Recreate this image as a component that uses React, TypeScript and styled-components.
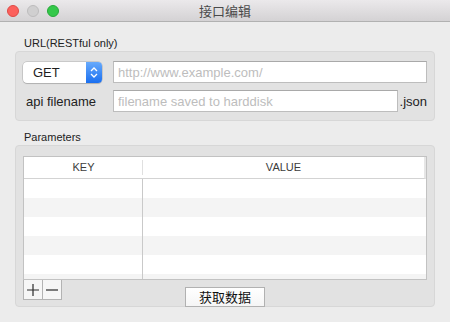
import styled, { createGlobalStyle } from "styled-components";

const GlobalStyle = createGlobalStyle`
  body {
    margin: 0;
    font-family: "Liberation Sans", "Noto Sans CJK SC", sans-serif;
    color: #262626;
  }
  * {
    box-sizing: border-box;
  }
`;

const LIGHTS = [
  { fill: "#fc605c", edge: "#de4a46" },
  { fill: "#d0cfd0", edge: "#bdbcbd" },
  { fill: "#34c84a", edge: "#27a93a" },
];

const ROW_COUNT = 6;

function App() {
  return (
    <>
      <GlobalStyle />
      <Window>
        <TitleBar>
          <Lights>
            {LIGHTS.map((l) => (
              <Light key={l.fill} $fill={l.fill} $edge={l.edge} />
            ))}
          </Lights>
          <Title>接口编辑</Title>
          <span />
        </TitleBar>

        <Content>
          <SectionLabel $top={15}>URL(RESTful only)</SectionLabel>
          <UrlBox>
            <Popup>
              <PopupText>GET</PopupText>
              <Stepper>
                <svg width="8" height="13" viewBox="0 0 8 13">
                  <path
                    d="M1 5 L4 2 L7 5 M1 8 L4 11 L7 8"
                    fill="none"
                    stroke="#fff"
                    strokeWidth="1.3"
                  />
                </svg>
              </Stepper>
            </Popup>
            <TextField placeholder="http://www.example.com/" />
            <FieldLabel>api filename</FieldLabel>
            <FileRow>
              <TextField placeholder="filename saved to harddisk" />
              <Suffix>.json</Suffix>
            </FileRow>
          </UrlBox>

          <SectionLabel $top={10}>Parameters</SectionLabel>
          <ParamBox>
            <Table>
              <HeaderRow>
                <HeaderCell $divider>KEY</HeaderCell>
                <HeaderCell>VALUE</HeaderCell>
              </HeaderRow>
              <Body>
                {Array.from({ length: ROW_COUNT }).map((_, i) => (
                  <Row key={i} $striped={i % 2 === 1}>
                    <KeyCell />
                    <div />
                  </Row>
                ))}
              </Body>
            </Table>
            <BottomRow>
              <SmallButtons>
                <SmallButton>
                  <svg width="14" height="14" viewBox="0 0 14 14">
                    <path d="M7 1 V13 M1 7 H13" stroke="#2b2b2b" strokeWidth="1.2" />
                  </svg>
                </SmallButton>
                <SmallButton>
                  <svg width="14" height="14" viewBox="0 0 14 14">
                    <path d="M1 7 H13" stroke="#2b2b2b" strokeWidth="1.2" />
                  </svg>
                </SmallButton>
              </SmallButtons>
              <FetchButton>获取数据</FetchButton>
              <span />
            </BottomRow>
          </ParamBox>
        </Content>
      </Window>
    </>
  );
}

const Window = styled.div`
  width: 450px;
  height: 322px;
  background: #ececec;
  display: flex;
  flex-direction: column;
  overflow: hidden;
`;

const TitleBar = styled.div`
  height: 22px;
  flex-shrink: 0;
  display: grid;
  grid-template-columns: 1fr auto 1fr;
  align-items: center;
  background: linear-gradient(#ebe9eb, #d4d2d4);
  border-bottom: 1px solid #b1b1b1;
`;

const Lights = styled.div`
  display: flex;
  gap: 8px;
  padding-left: 7px;
`;

const Light = styled.span<{ $fill: string; $edge: string }>`
  width: 12px;
  height: 12px;
  border-radius: 50%;
  background: ${(p) => p.$fill};
  border: 0.5px solid ${(p) => p.$edge};
`;

const Title = styled.div`
  font-family: "Noto Sans CJK SC", sans-serif;
  font-size: 13px;
  color: #4a4a4a;
  line-height: 21px;
`;

const Content = styled.div`
  padding: 0 15px;
  display: flex;
  flex-direction: column;
`;

const SectionLabel = styled.div<{ $top: number }>`
  margin: ${(p) => p.$top}px 0 1px 9px;
  font-size: 11px;
  line-height: 13px;
  color: #222;
`;

const GroupBox = styled.div`
  background: #e2e2e2;
  border: 1px solid #d7d7d7;
  border-radius: 4px;
`;

const UrlBox = styled(GroupBox)`
  height: 70px;
  padding: 9px 7px 0 7px;
  display: grid;
  grid-template-columns: 80px 1fr;
  grid-auto-rows: 22px;
  column-gap: 10px;
  row-gap: 7px;
  align-items: center;
`;

const Popup = styled.div`
  width: 79px;
  height: 21px;
  display: flex;
  background: #fff;
  border-radius: 4px;
  box-shadow: 0 0 0 0.5px rgba(0, 0, 0, 0.22), 0 1px 1px rgba(0, 0, 0, 0.12);
`;

const PopupText = styled.div`
  flex: 1;
  padding-left: 10px;
  font-size: 13px;
  line-height: 21px;
  color: #1e1e1e;
`;

const Stepper = styled.div`
  width: 16px;
  display: flex;
  align-items: center;
  justify-content: center;
  border-radius: 0 4px 4px 0;
  background: linear-gradient(#67aafc, #1a6ff0);
`;

const TextField = styled.input`
  width: 100%;
  height: 22px;
  min-width: 0;
  border: 1px solid #bdbdbd;
  border-top-color: #a9a9a9;
  background: #fff;
  padding: 0 4px;
  font-family: "Liberation Sans", sans-serif;
  font-size: 13px;
  color: #222;
  outline: none;
  &::placeholder {
    color: #bdbdbd;
  }
`;

const FieldLabel = styled.div`
  padding-left: 3px;
  font-size: 13px;
  color: #222;
  white-space: nowrap;
`;

const FileRow = styled.div`
  display: flex;
  align-items: center;
  gap: 2px;
`;

const Suffix = styled.span`
  font-size: 13px;
  color: #222;
`;

const ParamBox = styled(GroupBox)`
  height: 162px;
  padding: 10px 7px 0 7px;
  display: flex;
  flex-direction: column;
`;

const Table = styled.div`
  height: 124px;
  background: #fff;
  border: 1px solid #c2c2c2;
  display: flex;
  flex-direction: column;
`;

const HeaderRow = styled.div`
  height: 22px;
  flex-shrink: 0;
  display: grid;
  grid-template-columns: 119px 1fr;
  border-bottom: 1px solid #d3d3d3;
  border-right: 2px solid #e6e6e6;
`;

const HeaderCell = styled.div<{ $divider?: boolean }>`
  position: relative;
  font-size: 11px;
  line-height: 21px;
  text-align: center;
  color: #3c3c3c;
  &::after {
    content: "";
    display: ${(p) => (p.$divider ? "block" : "none")};
    position: absolute;
    right: 0;
    top: 3px;
    bottom: 3px;
    width: 1px;
    background: #e0e0e0;
  }
`;

const Body = styled.div`
  flex: 1;
  overflow: hidden;
`;

const Row = styled.div<{ $striped: boolean }>`
  height: 19px;
  display: grid;
  grid-template-columns: 119px 1fr;
  background: ${(p) => (p.$striped ? "#f4f4f4" : "#fff")};
`;

const KeyCell = styled.div`
  border-right: 1px solid #c9c9c9;
`;

const BottomRow = styled.div`
  height: 26px;
  display: grid;
  grid-template-columns: 1fr auto 1fr;
`;

const SmallButtons = styled.div`
  display: flex;
  align-self: start;
`;

const SmallButton = styled.div`
  width: 20px;
  height: 20px;
  display: flex;
  align-items: center;
  justify-content: center;
  background: #f6f6f6;
  border: 1px solid #b3b3b3;
  border-top: none;
  & + & {
    margin-left: -1px;
  }
`;

const FetchButton = styled.div`
  align-self: end;
  margin-bottom: -1px;
  width: 80px;
  height: 20px;
  background: linear-gradient(#ffffff, #f5f5f5);
  border: 1px solid #b1b1b1;
  font-family: "Noto Sans CJK SC", sans-serif;
  font-size: 13px;
  line-height: 18px;
  text-align: center;
  color: #111;
`;

export default App;
